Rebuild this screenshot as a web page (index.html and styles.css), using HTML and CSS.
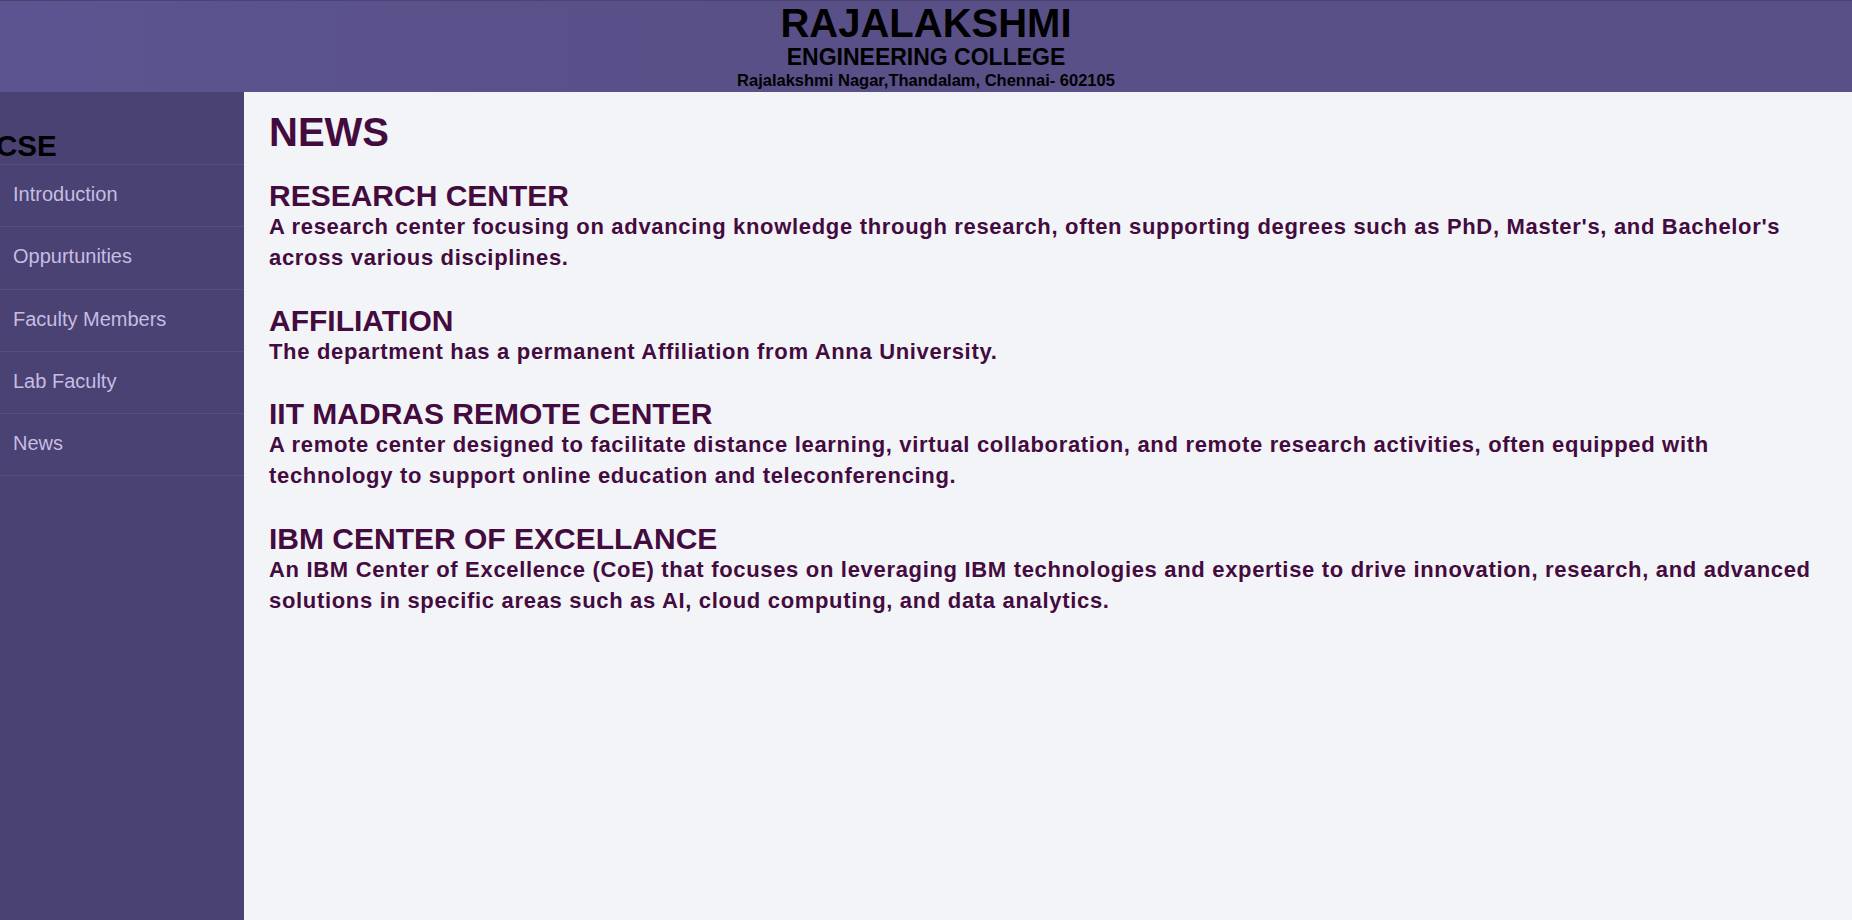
FILE: index.html
```html
<!DOCTYPE html>
<html lang="en">
<head>
<meta charset="utf-8">
<title>CSE - News</title>
<link rel="stylesheet" href="styles.css">
</head>
<body>
<header class="topbar">
  <div class="college-name">RAJALAKSHMI</div>
  <div class="college-sub">ENGINEERING COLLEGE</div>
  <div class="college-addr">Rajalakshmi Nagar,Thandalam, Chennai- 602105</div>
</header>
<div class="layout">
  <nav class="sidebar">
    <div class="dept">CSE</div>
    <ul class="menu">
      <li class="menu-item">Introduction</li>
      <li class="menu-item">Oppurtunities</li>
      <li class="menu-item">Faculty Members</li>
      <li class="menu-item">Lab Faculty</li>
      <li class="menu-item">News</li>
    </ul>
  </nav>
  <main class="content">
    <h1 class="page-title">NEWS</h1>
    <section class="news">
      <h2 class="news-title">RESEARCH CENTER</h2>
      <p class="news-text">A research center focusing on advancing knowledge through research, often supporting degrees such as PhD, Master's, and Bachelor's across various disciplines.</p>
    </section>
    <section class="news">
      <h2 class="news-title">AFFILIATION</h2>
      <p class="news-text">The department has a permanent Affiliation from Anna University.</p>
    </section>
    <section class="news">
      <h2 class="news-title">IIT MADRAS REMOTE CENTER</h2>
      <p class="news-text">A remote center designed to facilitate distance learning, virtual collaboration, and remote research activities, often equipped with technology to support online education and teleconferencing.</p>
    </section>
    <section class="news">
      <h2 class="news-title">IBM CENTER OF EXCELLANCE</h2>
      <p class="news-text">An IBM Center of Excellence (CoE) that focuses on leveraging IBM technologies and expertise to drive innovation, research, and advanced solutions in specific areas such as AI, cloud computing, and data analytics.</p>
    </section>
  </main>
</div>
</body>
</html>
```
FILE: styles.css
```css
* { box-sizing: border-box; }
html, body { margin: 0; padding: 0; }
body {
  font-family: "Liberation Sans", Arial, sans-serif;
  background: #f3f4f8;
  height: 920px;
  overflow: hidden;
}
.topbar {
  height: 92px;
  padding-top: 2px;
  border-top: 1px solid #4a4470;
  background: linear-gradient(90deg, #5c5490 0%, #595088 40%, #595087 100%);
  display: flex;
  flex-direction: column;
  align-items: center;
  color: #000;
  font-weight: bold;
  text-align: center;
}
.college-name {
  font-size: 40px;
  line-height: 40px;
}
.college-sub {
  font-size: 23px;
  line-height: 29.5px;
}
.college-addr {
  font-size: 16.5px;
  line-height: 14.2px;
}
.layout {
  display: flex;
  height: calc(100% - 92px);
}
.sidebar {
  width: 244px;
  flex: 0 0 244px;
  background: #4a4272;
  padding-top: 40px;
}
.dept {
  font-size: 29.5px;
  line-height: 28px;
  font-weight: bold;
  color: #000;
  margin-left: -4px;
  padding-bottom: 4px;
  border-bottom: 1px solid #564e80;
}
.menu {
  list-style: none;
  margin: 0;
  padding: 0;
}
.menu-item {
  font-size: 20px;
  line-height: 21.3px;
  color: #c6bde2;
  padding: 19px 13px 21px;
  border-bottom: 1px solid #564e80;
}
.content {
  flex: 1;
  padding: 17px 30px 0 25px;
  color: #440b3f;
}
.page-title {
  font-size: 40px;
  line-height: 46px;
  margin: 0 0 26px;
  font-weight: bold;
}
.news { margin-bottom: 32.7px; }
.news-title {
  font-size: 30px;
  line-height: 30px;
  margin: 0;
  font-weight: bold;
}
.news-text {
  font-size: 22px;
  line-height: 31px;
  letter-spacing: 0.68px;
  font-weight: bold;
  margin: 0;
}
```
